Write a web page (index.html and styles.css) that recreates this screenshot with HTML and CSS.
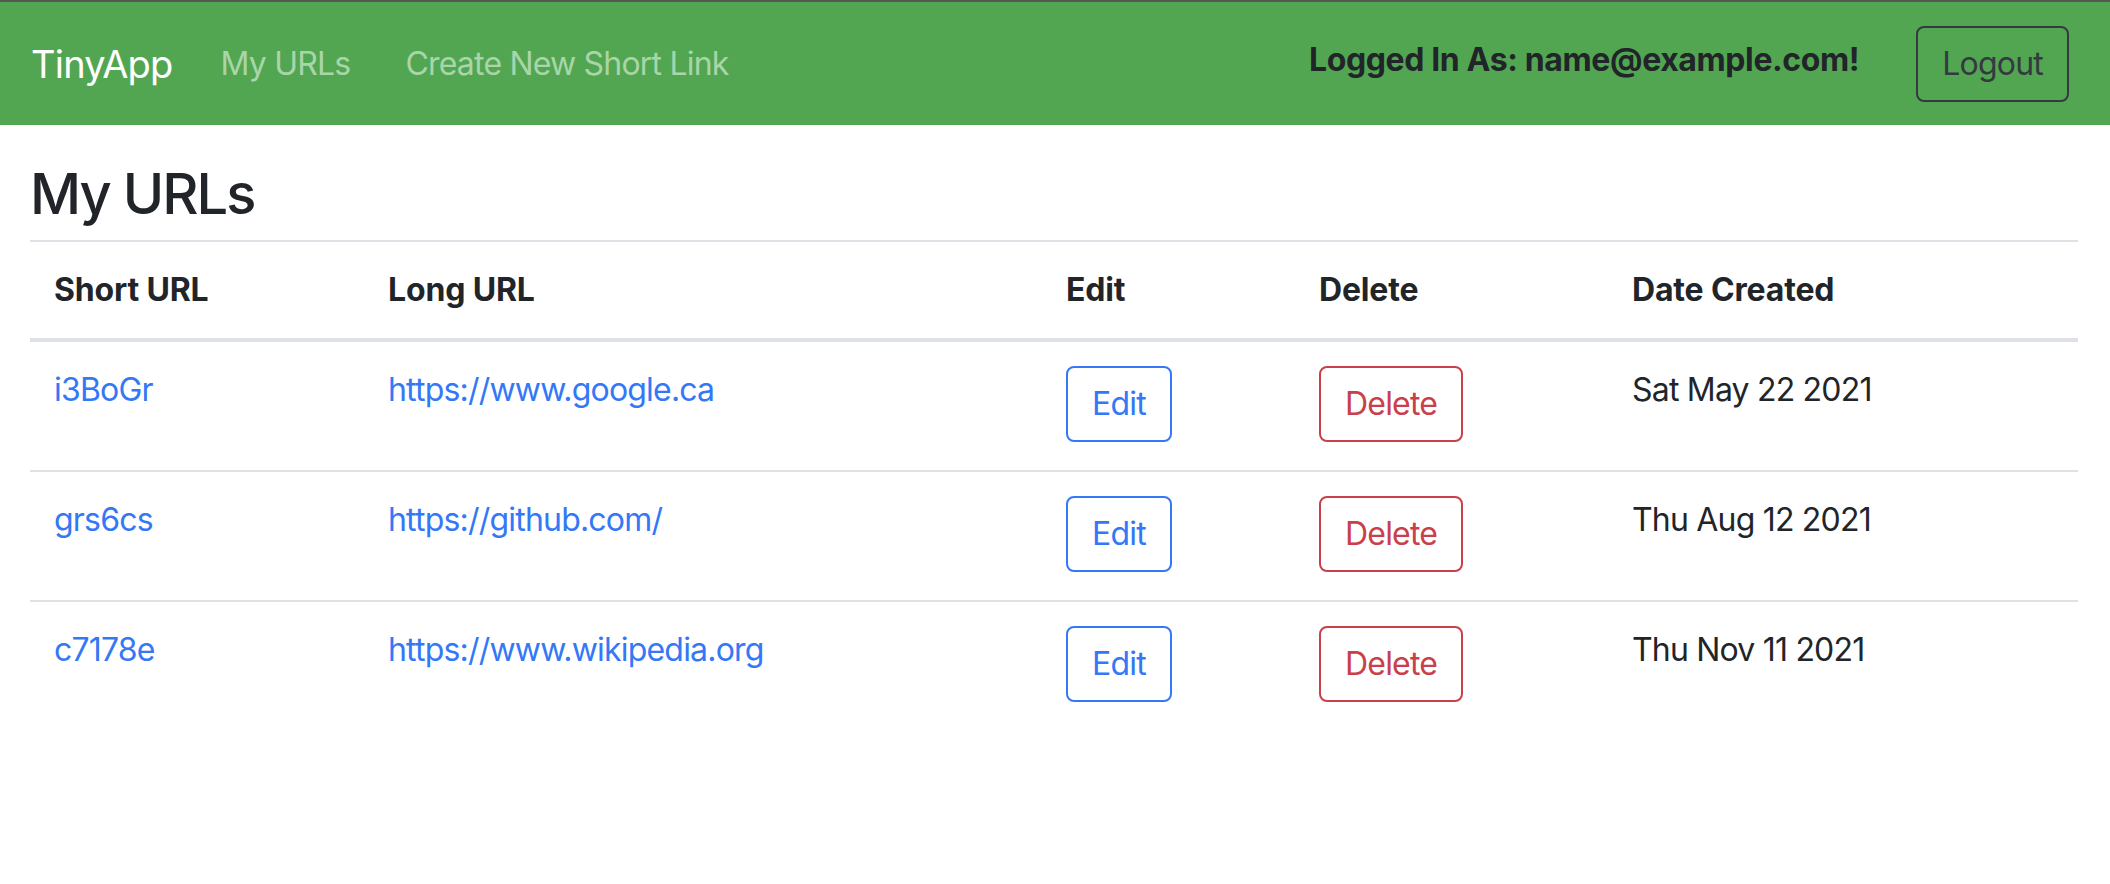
FILE: index.html
```html
<!DOCTYPE html>
<html lang="en">
<head>
<meta charset="utf-8">
<title>TinyApp</title>
<link rel="stylesheet" href="styles.css">
</head>
<body>
<nav class="navbar">
  <a class="brand" href="#">TinyApp</a>
  <div class="nav-links">
    <a class="nav-link" href="#">My URLs</a>
    <a class="nav-link" href="#">Create New Short Link</a>
  </div>
  <div class="nav-right">
    <span class="user">Logged In As: name@example.com!</span>
    <button class="btn btn-dark-outline">Logout</button>
  </div>
</nav>
<main class="content">
  <h3 class="title">My URLs</h3>
  <table class="url-table">
    <thead>
      <tr>
        <th class="col-short">Short URL</th>
        <th class="col-long">Long URL</th>
        <th class="col-edit">Edit</th>
        <th class="col-delete">Delete</th>
        <th class="col-date">Date Created</th>
      </tr>
    </thead>
    <tbody>
      <tr>
        <td><a href="#">i3BoGr</a></td>
        <td><a href="#">https://www.google.ca</a></td>
        <td><button class="btn btn-primary-outline">Edit</button></td>
        <td><button class="btn btn-danger-outline">Delete</button></td>
        <td>Sat May 22 2021</td>
      </tr>
      <tr>
        <td><a href="#">grs6cs</a></td>
        <td><a href="#">https://github.com/</a></td>
        <td><button class="btn btn-primary-outline">Edit</button></td>
        <td><button class="btn btn-danger-outline">Delete</button></td>
        <td>Thu Aug 12 2021</td>
      </tr>
      <tr>
        <td><a href="#">c7178e</a></td>
        <td><a href="#">https://www.wikipedia.org</a></td>
        <td><button class="btn btn-primary-outline">Edit</button></td>
        <td><button class="btn btn-danger-outline">Delete</button></td>
        <td>Thu Nov 11 2021</td>
      </tr>
    </tbody>
  </table>
</main>
</body>
</html>
```

FILE: styles.css
```css
* { box-sizing: border-box; }

html, body {
  margin: 0;
  padding: 0;
  background: #ffffff;
}

body {
  font-family: Inter, "Noto Sans", "Liberation Sans", sans-serif;
  font-size: 32px;
  line-height: 48px;
  letter-spacing: -0.025em;
  color: #212529;
}

a { color: #3478f6; text-decoration: none; }

.navbar {
  display: flex;
  align-items: center;
  height: 125px;
  border-top: 2px solid #575757;
  background: #52a652;
  padding: 0 41px 0 31px;
}

.brand {
  color: #ffffff;
  font-size: 38px;
  line-height: 60px;
  margin-right: 48px;
}

.nav-links {
  display: flex;
  gap: 55px;
}

.nav-link {
  color: #a9d5a9;
  font-size: 32px;
}

.nav-right {
  margin-left: auto;
  display: flex;
  align-items: center;
  gap: 57px;
}

.user {
  font-weight: 700;
  letter-spacing: -0.012em;
  color: #212529;
  margin-bottom: 7px;
}

.btn {
  display: inline-block;
  font-family: inherit;
  font-size: 32px;
  line-height: 48px;
  letter-spacing: -0.025em;
  padding: 12px 24px;
  border-radius: 8px;
  border: 2px solid;
  background: transparent;
  cursor: pointer;
}

.btn-dark-outline { border-color: #343a40; color: #343a40; }
.btn-primary-outline { border-color: #3478f6; color: #3478f6; }
.btn-danger-outline { border-color: #c9404a; color: #c9404a; }

.content {
  padding: 0 32px 0 30px;
}

.title {
  font-size: 56px;
  font-weight: 500;
  line-height: 67px;
  letter-spacing: -0.035em;
  margin: 36px 0 12px;
}

.url-table {
  width: 100%;
  border-collapse: collapse;
  table-layout: fixed;
}

.url-table th,
.url-table td {
  padding: 24px;
  text-align: left;
  vertical-align: top;
  border-top: 2px solid #dee2e6;
}

.url-table th {
  font-weight: 700;
  letter-spacing: -0.005em;
  vertical-align: bottom;
  border-bottom: 4px solid #dee2e6;
}

.url-table td .btn {
  vertical-align: top;
  margin-bottom: 4px;
}

.col-short { width: 334px; }
.col-long { width: 678px; }
.col-edit { width: 253px; }
.col-delete { width: 313px; }
```
